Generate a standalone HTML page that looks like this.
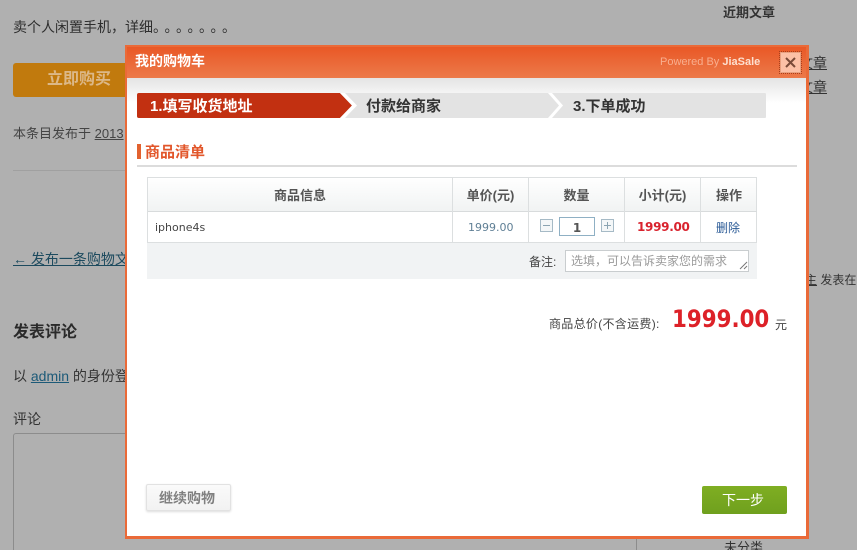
<!DOCTYPE html>
<html lang="zh">
<head>
<meta charset="utf-8">
<title>我的购物车</title>
<style>
html,body{margin:0;padding:0;width:857px;height:550px;overflow:hidden}
#w{position:absolute;left:0;top:0;width:857px;height:550px;overflow:hidden;background:#b0b0b0;font-family:"Liberation Sans","WenQuanYi Zen Hei","Noto Sans CJK SC",sans-serif;font-size:14px;color:#333}
.a{position:absolute;white-space:nowrap;line-height:1}
u{text-decoration:underline}
.d{font-family:"DejaVu Sans",sans-serif}
.th{position:absolute;top:178px;height:33px;line-height:36px;text-align:center;font-size:13px;font-weight:bold;color:#555}
.vl{position:absolute;width:1px;background:#dcdfe0;top:178px;height:64px}
.qb{position:absolute;top:219px;width:11px;height:11px;border:1px solid #a6bac6;background:#f4f7f8}
.qb svg{position:absolute;left:0;top:0}
</style>
</head>
<body>
<div id="w">
<!-- background page -->
<div class="a" style="left:13px;top:20px;font-size:14px;color:#2e2e2e">卖个人闲置手机，详细<span style="letter-spacing:4.5px">。。。。。。。</span></div>
<div class="a" style="left:13px;top:63px;width:125px;height:34px;background:#c17a0d;border-radius:3px"></div>
<div class="a" style="left:47px;top:72px;font-size:16px;font-weight:bold;color:#dcb888">立即购买</div>
<div class="a" style="left:13px;top:127px;font-size:13px;color:#444">本条目发布于 <u>2013</u></div>
<div class="a" style="left:13px;top:170px;width:115px;height:1px;background:#a0a0a0"></div>
<div class="a" style="left:13px;top:252px;font-size:14px;color:#1c4a5e"><u>← 发布一条购物文</u></div>
<div class="a" style="left:13px;top:325px;font-size:16px;font-weight:bold;color:#2a2a2a">发表评论</div>
<div class="a" style="left:13px;top:369px;font-size:14px;color:#333">以 <u style="color:#1c5a78">admin</u> 的身份登</div>
<div class="a" style="left:13px;top:412px;font-size:14px;color:#333">评论</div>
<div class="a" style="left:13px;top:433px;width:622px;height:130px;border:1px solid #8c8c8c;border-radius:3px"></div>
<div class="a" style="left:723px;top:6px;font-size:13px;font-weight:bold;color:#333">近期文章</div>
<div class="a" style="left:799px;top:56px;font-size:14px;color:#333"><u>文章</u></div>
<div class="a" style="left:799px;top:80px;font-size:14px;color:#333"><u>文章</u></div>
<div class="a" style="left:805px;top:274px;font-size:12px;color:#333"><u>主</u> 发表在</div>
<div class="a" style="left:724px;top:541px;font-size:13px;color:#333">未分类</div>

<!-- modal -->
<div class="a" style="left:125px;top:45px;width:679px;height:489px;border:2px solid #ea6a38;border-right-width:3px;border-bottom-width:3px;background:#fff"></div>
<div class="a" style="left:127px;top:47px;width:679px;height:31px;background:linear-gradient(#e95826,#ec7a4a)"></div>
<div class="a" style="left:127px;top:78px;width:679px;height:25px;background:linear-gradient(#e4e4e4,#fff)"></div>
<div class="a" style="left:135px;top:54px;font-size:14px;font-weight:bold;color:#fff">我的购物车</div>
<div class="a" style="left:660px;top:57px;font-size:11px;color:#f8ae8e">Powered By <b style="color:#fde0d0">JiaSale</b></div>
<div class="a" style="left:780px;top:52px;width:19px;height:19px;background:#fcc0a6;border:1px solid #e8a080;outline:1px dotted #a8401c"></div>
<svg class="a" style="left:780px;top:52px" width="21" height="21"><path d="M6 6L15 15M15 6L6 15" stroke="#7a4a38" stroke-width="2"/></svg>

<!-- steps -->
<svg class="a" style="left:137px;top:93px" width="630" height="25">
<rect x="0" y="0" width="629" height="25" fill="#e3e3e3" rx="1"/>
<path d="M0 2Q0 0 2 0H203L215 12.5L203 25H2Q0 25 0 23Z" fill="#c23011"/>
<path d="M203 0H208L220 12.5L208 25H203L215 12.5Z" fill="#fff"/>
<path d="M411 0H415L426 12.5L415 25H411L422 12.5Z" fill="#fff"/>
</svg>
<div class="a" style="left:150px;top:99px;font-size:15px;font-weight:bold;color:#fff">1.填写收货地址</div>
<div class="a" style="left:366px;top:99px;font-size:15px;font-weight:bold;color:#333">付款给商家</div>
<div class="a" style="left:573px;top:99px;font-size:15px;font-weight:bold;color:#333">3.下单成功</div>

<!-- section title -->
<div class="a" style="left:137px;top:144px;width:4px;height:15px;background:#e2622f"></div>
<div class="a" style="left:145px;top:145px;font-size:15px;font-weight:bold;color:#e2562a">商品清单</div>
<div class="a" style="left:137px;top:165px;width:660px;height:2px;background:#dcdcdc"></div>

<!-- table -->
<div class="a" style="left:147px;top:177px;width:608px;height:64px;border:1px solid #dcdfe0"></div>
<div class="a" style="left:148px;top:178px;width:608px;height:33px;background:linear-gradient(#fff,#f1f3f3)"></div>
<div class="a" style="left:148px;top:211px;width:609px;height:1px;background:#d8dbdc"></div>
<div class="vl a" style="left:452px"></div>
<div class="vl a" style="left:528px"></div>
<div class="vl a" style="left:624px"></div>
<div class="vl a" style="left:700px"></div>
<div class="th" style="left:148px;width:304px">商品信息</div>
<div class="th" style="left:453px;width:75px">单价(元)</div>
<div class="th" style="left:529px;width:95px">数量</div>
<div class="th" style="left:625px;width:75px">小计(元)</div>
<div class="th" style="left:701px;width:56px">操作</div>
<div class="a d" style="left:155px;top:222px;font-size:11px;color:#444">iphone4s</div>
<div class="a d" style="left:468px;top:222px;font-size:11px;color:#5f7f95">1999.00</div>
<div class="qb" style="left:540px"><svg width="11" height="11"><path d="M2 5.5H9" stroke="#8ba4b2"/></svg></div>
<div class="a d" style="left:559px;top:217px;width:34px;height:17px;border:1px solid #8fb0c4;background:#fff;text-align:center;line-height:20px;font-size:12px;font-weight:bold;color:#555">1</div>
<div class="qb" style="left:601px"><svg width="11" height="11"><path d="M2 5.5H9M5.5 2V9" stroke="#8ba4b2"/></svg></div>
<div class="a d" style="left:637px;top:221px;font-size:12px;font-weight:bold;letter-spacing:-.3px;color:#d9232e">1999.00</div>
<div class="a" style="left:716px;top:222px;font-size:12px;color:#2a5a96">删除</div>

<!-- note -->
<div class="a" style="left:147px;top:243px;width:610px;height:36px;background:#f1f3f4"></div>
<div class="a" style="left:529px;top:256px;font-size:12px;color:#444">备注:</div>
<div class="a" style="left:565px;top:250px;width:182px;height:20px;border:1px solid #c9cdcf;background:#fff"></div>
<div class="a" style="left:571px;top:255px;font-size:12px;color:#9a9a9a">选填，可以告诉卖家您的需求</div>
<svg class="a" style="left:738px;top:260px" width="10" height="10"><path d="M2 9L9 2M6 9L9 6" stroke="#777" stroke-width="1"/></svg>

<!-- total -->
<div class="a" style="left:549px;top:318px;font-size:12px;letter-spacing:.3px;color:#444">商品总价(不含运费):</div>
<div class="a d" style="left:672px;top:307px;font-size:24px;font-weight:bold;color:#dd2128;transform:scaleX(.89);transform-origin:0 0">1999.00</div>
<div class="a" style="left:775px;top:319px;font-size:12px;color:#444">元</div>

<!-- buttons -->
<div class="a" style="left:146px;top:484px;width:83px;height:25px;border:1px solid #e2e2e2;border-radius:2px;background:linear-gradient(#fafafa,#f2f2f2);box-shadow:0 1px 2px #ddd"></div>
<div class="a" style="left:159px;top:491px;font-size:14px;font-weight:bold;color:#808080">继续购物</div>
<div class="a" style="left:702px;top:486px;width:85px;height:28px;border-radius:2px;background:linear-gradient(#7fae22,#6fa01e)"></div>
<div class="a" style="left:722px;top:493px;font-size:14px;color:#fff">下一步</div>
</div>
</body>
</html>
